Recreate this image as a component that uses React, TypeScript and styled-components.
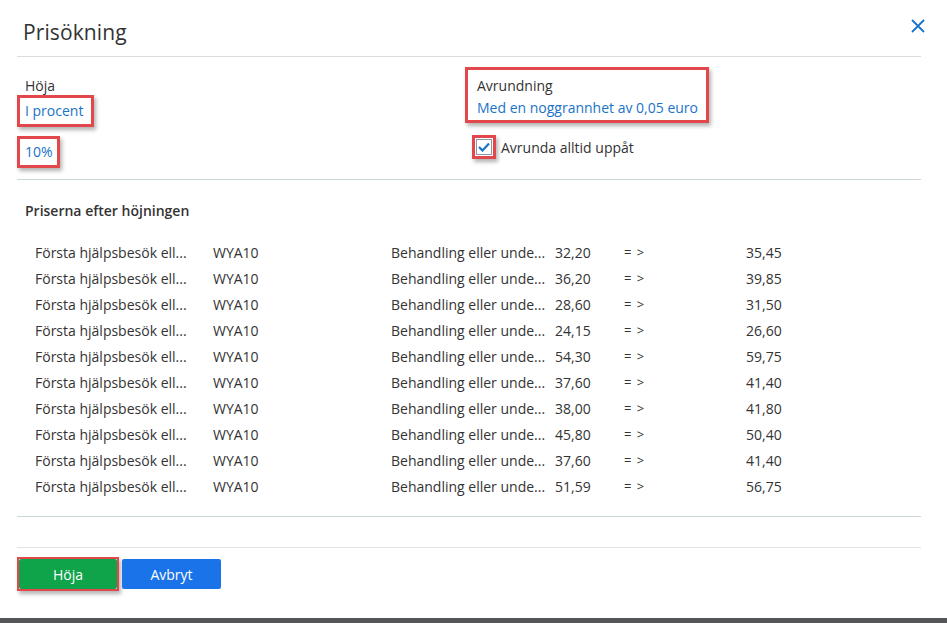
import React from "react";
import styled, { createGlobalStyle } from "styled-components";

interface IPriceRow {
	name: string;
	code: string;
	description: string;
	oldPrice: string;
	newPrice: string;
}

const GlobalStyle = createGlobalStyle`
	html, body {
		margin: 0;
		padding: 0;
		background: #fff;
	}
	body {
		font-family: "Open Sans", "Noto Sans", "Liberation Sans", sans-serif;
		color: #333;
	}
`;

const StyledPage = styled.div`
	width: 947px;
	height: 623px;
	display: flex;
	flex-direction: column;
	background: #fff;
	overflow: hidden;
`;

const StyledDialog = styled.div`
	flex: 1;
	padding: 0 26px 0 17px;
	display: flex;
	flex-direction: column;
`;

const StyledHeader = styled.div`
	height: 56px;
	display: flex;
	align-items: center;
	justify-content: space-between;
	border-bottom: 1px solid #d8dde2;
	padding-left: 6px;
`;

const StyledTitle = styled.h1`
	margin: 8px 0 0;
	font-size: 21px;
	font-weight: 400;
	color: #333;
	letter-spacing: 0.1px;
`;

const StyledClose = styled.button`
	border: none;
	background: none;
	padding: 0;
	margin: 0 -6px 4px 0;
	width: 18px;
	height: 18px;
	display: flex;
	align-items: center;
	justify-content: center;
	cursor: pointer;
`;

const StyledSettings = styled.div`
	display: grid;
	grid-template-columns: 448px 1fr;
	height: 122px;
	border-bottom: 1px solid #c9d6da;
`;

const StyledColumn = styled.div<{ $top: number }>`
	display: flex;
	flex-direction: column;
	align-items: flex-start;
	padding-top: ${(p) => p.$top}px;
`;

const StyledLabel = styled.div`
	font-size: 14px;
	line-height: 18px;
	color: #333;
	padding-left: 8px;
`;

const StyledHighlight = styled.div<{ $pad: string }>`
	border: 3px solid #e2474b;
	box-shadow: 2px 3px 4px rgba(0, 0, 0, 0.3);
	padding: ${(p) => p.$pad};
`;

const StyledLink = styled.a`
	display: block;
	font-size: 14px;
	line-height: 18px;
	color: #1a73c8;
	text-decoration: none;
	cursor: pointer;
`;

const StyledCheckRow = styled.label`
	display: flex;
	align-items: center;
	gap: 5px;
	margin-top: 12px;
	margin-left: 7px;
	font-size: 14px;
	color: #333;
`;

const StyledCheckFrame = styled.span`
	display: flex;
	border: 3px solid #e2474b;
	box-shadow: 2px 3px 4px rgba(0, 0, 0, 0.3);
	padding: 1px;
`;

const StyledCheckBox = styled.span`
	width: 16px;
	height: 16px;
	border: 1px solid #8a96a3;
	background: #fff;
	display: flex;
	align-items: center;
	justify-content: center;
	box-sizing: border-box;
`;

const StyledSectionTitle = styled.div`
	font-size: 14px;
	font-weight: 600;
	color: #333;
	padding: 22px 0 0 8px;
	line-height: 18px;
`;

const StyledTable = styled.div`
	margin-top: 19px;
	padding-bottom: 17px;
	border-bottom: 1px solid #c9d6da;
`;

const StyledRow = styled.div`
	display: grid;
	grid-template-columns: 178px 178px 164px 69px 122px 1fr;
	height: 26px;
	align-items: center;
	padding-left: 18px;
	font-size: 14px;
	color: #333;
	white-space: nowrap;
`;

const StyledCell = styled.span`
	overflow: hidden;
	text-overflow: ellipsis;
`;

const StyledArrow = styled.span`
	letter-spacing: 1px;
	font-size: 13px;
`;

const StyledFooter = styled.div`
	margin-top: 30px;
	border-top: 1px solid #e0e4e7;
	padding-top: 9px;
	display: flex;
	gap: 3px;
	align-items: center;
`;

const StyledButton = styled.button<{ $color: string; $width: number }>`
	height: 30px;
	width: ${(p) => p.$width}px;
	border: none;
	border-radius: 2px;
	background: ${(p) => p.$color};
	color: #fff;
	font-family: inherit;
	font-size: 14px;
	cursor: pointer;
	padding: 0;
`;

const StyledPrimaryFrame = styled.span`
	display: flex;
	border: 2px solid #e2474b;
	box-shadow: 2px 3px 4px rgba(0, 0, 0, 0.3);
`;

const StyledBottomBar = styled.div`
	height: 5px;
	background: #555658;
`;

const rows: IPriceRow[] = [
	["32,20", "35,45"],
	["36,20", "39,85"],
	["28,60", "31,50"],
	["24,15", "26,60"],
	["54,30", "59,75"],
	["37,60", "41,40"],
	["38,00", "41,80"],
	["45,80", "50,40"],
	["37,60", "41,40"],
	["51,59", "56,75"],
].map(([oldPrice, newPrice]) => ({
	name: "Första hjälpsbesök ell...",
	code: "WYA10",
	description: "Behandling eller unde...",
	oldPrice,
	newPrice,
}));

export default function App() {
	return (
		<StyledPage>
			<GlobalStyle />
			<StyledDialog>
				<StyledHeader>
					<StyledTitle>Prisökning</StyledTitle>
					<StyledClose aria-label="Stäng">
						<svg width="14" height="14" viewBox="0 0 14 14">
							<path d="M1 1 L13 13 M13 1 L1 13" stroke="#1a73c8" strokeWidth="1.8" fill="none" />
						</svg>
					</StyledClose>
				</StyledHeader>

				<StyledSettings>
					<StyledColumn $top={20}>
						<StyledLabel>Höja</StyledLabel>
						<StyledHighlight $pad="4px 8px 4px 5px">
							<StyledLink>I procent</StyledLink>
						</StyledHighlight>
						<StyledHighlight $pad="4px 4px 4px 5px" style={{ marginTop: 9 }}>
							<StyledLink>10%</StyledLink>
						</StyledHighlight>
					</StyledColumn>
					<StyledColumn $top={10}>
						<StyledHighlight $pad="7px 8px 3px 9px">
							<StyledLabel style={{ paddingLeft: 0 }}>Avrundning</StyledLabel>
							<StyledLink style={{ marginTop: 4 }}>Med en noggrannhet av 0,05 euro</StyledLink>
						</StyledHighlight>
						<StyledCheckRow>
							<StyledCheckFrame>
								<StyledCheckBox>
									<svg width="12" height="10" viewBox="0 0 12 10">
										<path d="M1 5 L4.5 8.5 L11 1.5" stroke="#1a73c8" strokeWidth="2.2" fill="none" />
									</svg>
								</StyledCheckBox>
							</StyledCheckFrame>
							Avrunda alltid uppåt
						</StyledCheckRow>
					</StyledColumn>
				</StyledSettings>

				<StyledSectionTitle>Priserna efter höjningen</StyledSectionTitle>

				<StyledTable>
					{rows.map((row, i) => (
						<StyledRow key={i}>
							<StyledCell>{row.name}</StyledCell>
							<StyledCell>{row.code}</StyledCell>
							<StyledCell>{row.description}</StyledCell>
							<StyledCell>{row.oldPrice}</StyledCell>
							<StyledArrow>= &gt;</StyledArrow>
							<StyledCell>{row.newPrice}</StyledCell>
						</StyledRow>
					))}
				</StyledTable>

				<StyledFooter>
					<StyledPrimaryFrame>
						<StyledButton $color="#0fa34a" $width={98}>Höja</StyledButton>
					</StyledPrimaryFrame>
					<StyledButton $color="#1a73e8" $width={99}>Avbryt</StyledButton>
				</StyledFooter>
			</StyledDialog>
			<StyledBottomBar />
		</StyledPage>
	);
}
